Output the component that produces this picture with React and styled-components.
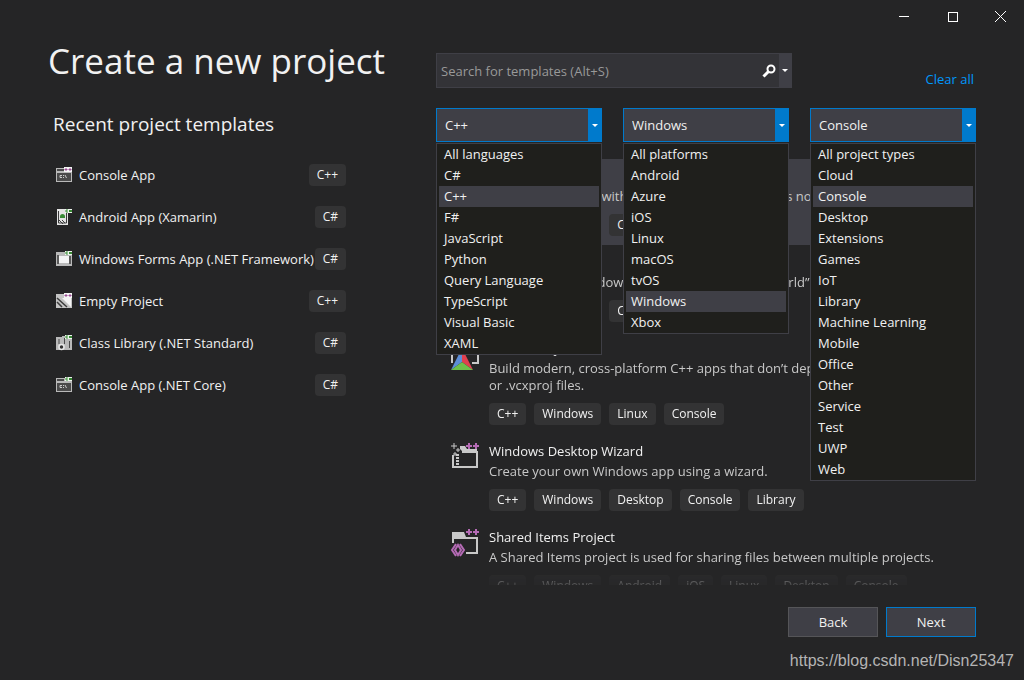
import React, { useState } from "react";
import styled, { createGlobalStyle, css } from "styled-components";

const GlobalStyle = createGlobalStyle`
  * {
    box-sizing: border-box;
  }

  body {
    margin: 0;
    background: #252526;
    color: #f1f1f1;
    font: 13px/20px "Open Sans", "Noto Sans", sans-serif;
  }

  button, input, select {
    font: inherit;
    color: inherit;
  }
`;

const Window = styled.div`
  display: flex;
  flex-direction: column;
  min-height: 100vh;
`;

const TitleBar = styled.div`
  display: flex;
  justify-content: flex-end;
`;

const WindowButton = styled.button`
  display: flex;
  align-items: center;
  justify-content: center;
  width: 48px;
  height: 32px;
  padding: 0;
  border: 0;
  background: none;
`;

const Columns = styled.main`
  display: grid;
  grid-template-columns: 298px minmax(0, 1fr);
  column-gap: 90px;
  padding: 0 48px;
`;

const PageTitle = styled.h1`
  margin: 5px 0 0;
  font-size: 35px;
  line-height: 48px;
  font-weight: 400;
  white-space: nowrap;
`;

const RecentPanel = styled.section`
  padding-left: 5px;
`;

const SectionTitle = styled.h2`
  margin: 24px 0 25px;
  font-size: 19px;
  line-height: 30px;
  font-weight: 400;
`;

const RecentList = styled.ul`
  display: flex;
  flex-direction: column;
  gap: 20px;
  margin: 0;
  padding: 0 0 0 3px;
  list-style: none;
`;

const RecentItem = styled.li`
  display: flex;
  align-items: center;
  height: 22px;
  white-space: nowrap;
`;

const RecentName = styled.span`
  flex: 1;
  min-width: 0;
  padding-left: 7px;
`;

const Tag = styled.span`
  padding: 0 8px;
  border-radius: 4px;
  background: #333334;
  font-size: 12px;
  line-height: 22px;
`;

const SearchRow = styled.div`
  display: flex;
  align-items: flex-end;
  justify-content: space-between;
  margin-top: 21px;
`;

const SearchBox = styled.div`
  display: flex;
  align-items: center;
  width: 66%;
  height: 35px;
  border: 1px solid #3f3f46;
  background: #333337;
`;

const SearchInput = styled.input`
  flex: 1;
  min-width: 0;
  padding: 0 4px;
  border: 0;
  outline: 0;
  background: none;

  &::placeholder {
    color: #999;
    opacity: 1;
  }
`;

const SearchButton = styled.button`
  display: flex;
  align-items: center;
  justify-content: center;
  width: 20px;
  height: 100%;
  padding: 0;
  border: 0;
  background: none;
`;

const SearchOptions = styled(SearchButton)`
  width: 12px;
  background: #3f3f46;
`;

const ClearLink = styled.a`
  padding-right: 2px;
  line-height: 18px;
  color: #0097fb;
  text-decoration: none;
`;

const Filters = styled.div`
  display: grid;
  grid-template-columns: repeat(3, minmax(0, 1fr));
  gap: 21px;
  margin-top: 20px;
`;

const Filter = styled.div`
  position: relative;
`;

const SelectFrame = styled.div`
  display: flex;
  align-items: center;
  height: 34px;
  border: 1px solid #007acc;
  background: linear-gradient(#007acc, #007acc) right / 13px 100% no-repeat #3f3f46;
`;

const Select = styled.select`
  flex: 1;
  min-width: 0;
  height: 100%;
  padding: 0 8px;
  border: 0;
  outline: 0;
  appearance: none;
  background: none;
`;

const SelectArrow = styled.span`
  display: flex;
  justify-content: center;
  width: 13px;
  pointer-events: none;
`;

const Menu = styled.ul`
  position: absolute;
  z-index: 1;
  top: 100%;
  left: 0;
  right: 0;
  margin: 1px 0 0;
  padding: 0 2px;
  border: 1px solid #3f3f46;
  background: #1f1f1c;
  list-style: none;
`;

const MenuItem = styled.li`
  padding: 0 5px;
  line-height: 21px;
  white-space: nowrap;
  cursor: default;
  ${({ $selected }) => $selected && css`
    background: #3f3f46;
  `}
`;

const Templates = styled.ul`
  height: 426px;
  margin: 17px 0 0;
  padding: 0;
  overflow: hidden;
  list-style: none;
  mask-image: linear-gradient(#000 410px, rgba(0, 0, 0, 0.4) 415px, rgba(0, 0, 0, 0.2));
`;

const Template = styled.li`
  display: flex;
  gap: 10px;
  padding: 7px 16px 9px 15px;
  background: ${({ $active }) => ($active ? "#3f3f46" : "none")};
`;

const TemplateIcon = styled.svg`
  flex: none;
  width: 28px;
  height: 28px;
  margin-top: 2px;
`;

const TemplateName = styled.h3`
  margin: 0;
  font-size: 13px;
  line-height: 20px;
  font-weight: 400;
`;

const TemplateText = styled.p`
  margin: 2px 0 9px;
  line-height: 17px;
  color: #c8c8c8;
`;

const Tags = styled.div`
  display: flex;
  gap: 8px;
`;

const Actions = styled.div`
  display: flex;
  justify-content: flex-end;
  gap: 8px;
  padding: 22px 48px 0;
`;

const ActionButton = styled.button`
  width: 90px;
  height: 30px;
  padding: 0;
  border: 1px solid ${({ $primary }) => ($primary ? "#007acc" : "#555558")};
  background: #3f3f46;
`;

const Credit = styled.footer`
  margin-top: auto;
  padding: 0 10px 8px;
  color: #b4b4b4;
  font: 16px/22px "Liberation Sans", Arial, sans-serif;
  text-align: right;
`;

const RECENT = [
    { name: "Console App", language: "C++", art: "console" },
    { name: "Android App (Xamarin)", language: "C#", art: "android" },
    { name: "Windows Forms App (.NET Framework)", language: "C#", art: "forms" },
    { name: "Empty Project", language: "C++", art: "empty" },
    { name: "Class Library (.NET Standard)", language: "C#", art: "library" },
    { name: "Console App (.NET Core)", language: "C#", art: "console" }
];

const FILTERS = [
    {
        label: "Language",
        value: "C++",
        options: ["All languages", "C#", "C++", "F#", "JavaScript", "Python",
            "Query Language", "TypeScript", "Visual Basic", "XAML"]
    },
    {
        label: "Platform",
        value: "Windows",
        options: ["All platforms", "Android", "Azure", "iOS", "Linux", "macOS",
            "tvOS", "Windows", "Xbox"]
    },
    {
        label: "Project type",
        value: "Console",
        options: ["All project types", "Cloud", "Console", "Desktop", "Extensions",
            "Games", "IoT", "Library", "Machine Learning", "Mobile", "Office",
            "Other", "Service", "Test", "UWP", "Web"]
    }
];

const TEMPLATES = [
    {
        name: "Empty Project",
        text: "Start from scratch with C++ for Windows. Provides no starting files.",
        tags: ["C++", "Windows", "Console"],
        art: "empty"
    },
    {
        name: "Console App",
        text: "Run code in a Windows terminal. Prints “Hello World” by default.",
        tags: ["C++", "Windows", "Console"],
        art: "console"
    },
    {
        name: "CMake Project",
        text: "Build modern, cross-platform C++ apps that don’t depend on .sln or\u00a0.vcxproj\u00a0files.",
        tags: ["C++", "Windows", "Linux", "Console"],
        art: "cmake"
    },
    {
        name: "Windows Desktop Wizard",
        text: "Create your own Windows app using a wizard.",
        tags: ["C++", "Windows", "Desktop", "Console", "Library"],
        art: "wizard"
    },
    {
        name: "Shared Items Project",
        text: "A Shared Items project is used for sharing files between multiple projects.",
        tags: ["C++", "Windows", "Android", "iOS", "Linux", "Desktop", "Console"],
        art: "shared"
    }
];

const RECENT_ART = {
    console: <>
        <path d="M0 1h16v14H0z" fill="#b9b9b9"/>
        <path d="M1 2h7v2H1zM1 6h14v8H1z" fill="#4a4a4a"/>
        <path d="M6 8.500H4v2h2M7.500 8v1M7.500 10v1M9 8l1.500 3" stroke="#ccc" fill="none"/>
    </>,
    android: <>
        <path d="M1 0h11v16H1z" fill="#e4e4e4"/>
        <path d="M2.500 2v12h8V2" stroke="#3c3c3c" fill="none"/>
        <path d="M4 7.500a2.500 2.500 0 0 1 5 0V9H4z" fill="#388a34"/>
        <path d="M3 11l4 4M6 11l3 3" stroke="#3c3c3c"/>
    </>,
    forms: <>
        <path d="M0 1h16v14H0z" fill="#b9b9b9"/>
        <path d="M1 4h2v9H1zM13 5h2v8h-2z" fill="#5a5a5a"/>
        <path d="M3 5h10v7H3z" fill="#f4f4f4"/>
    </>,
    empty: <>
        <path d="M0 1h16v14H0z" fill="#c4c4c4"/>
        <path d="M6 5h9v9z" fill="#f4f4f4"/>
        <path d="M1 5l10 9M1 9l5 5" stroke="#3c3c3c" strokeWidth="1.500"/>
    </>,
    library: <>
        <path d="M0 2h6v13H0zM6 1h5v14H6zM11 4h5v11h-5z" fill="#b9b9b9"/>
        <path d="M3 4v5M8.500 3v6M13.500 6v7" stroke="#4a4a4a"/>
        <circle cx="5.500" cy="12" r="2.500" fill="#333" stroke="#e8e8e8" strokeWidth="1.500"/>
    </>
};

const TEMPLATE_ART = {
    empty: <path d="M1.500 7v19h25V9M1 6h13v3h12" fill="none" stroke="#c8c8c8" strokeWidth="2"/>,
    console: <path d="M1.500 7v19h25V9M1 8h25M6 14l4 3-4 3" fill="none" stroke="#c8c8c8" strokeWidth="2"/>,
    cmake: <>
        <path d="M1 6h26v17H21M1 6v17" fill="none" stroke="#c8c8c8" strokeWidth="2"/>
        <path d="M11 8L0 30l11-8z" fill="#5c8dd6"/>
        <path d="M11 8l11 22-11-8z" fill="#e0404f"/>
        <path d="M0 30h22l-11-8z" fill="#6cc04a"/>
    </>,
    wizard: <>
        <path d="M9 3h5l2 3h10v3H12L9 6z" fill="#c8c8c8"/>
        <path d="M11 9h15v15H2V12" fill="none" stroke="#c8c8c8" strokeWidth="2"/>
        <path d="M5 12h3M5 15h3M5 18h3M5 21h3" stroke="#c8c8c8" strokeWidth="2"/>
        <path d="M3 0v6M0 3h6M7 5v4M5 7h4M4 9v4M2 11h4" stroke="#c8c8c8"/>
    </>,
    shared: <>
        <path d="M1 3h12l2 5h12v17H15v-2h10V10H3v4H1z" fill="#c8c8c8"/>
        <path d="M5 15l-4 6 4 6M9 15l4 6-4 6M7 16l-3 5 3 5 3-5z" fill="none" stroke="#b56bb5" strokeWidth="2"/>
    </>
};

const RecentIcon = ({ art, language }) => (
    <svg width="16" height="16" viewBox="0 0 16 16" aria-hidden="true">
        {RECENT_ART[art]}
        {language === "C++" ? <>
            <path d="M8 0h8v5H8z" fill="#f4f4f4"/>
            <path d="M8.500 2.500h3M10 1v3M12.500 2.500h3M14 1v3" stroke="#9b4f96"/>
        </> : <>
            <path d="M9 0h7v4H9z" fill="#eef6ee"/>
            <path d="M12 1h-2v2h2M13 1.500h3M13 2.500h3" stroke="#388a34" fill="none"/>
        </>}
    </svg>
);

const Arrow = () => (
    <svg width="6" height="3" viewBox="0 0 6 3" aria-hidden="true">
        <path d="M0 0h6L3 3z" fill="#fff"/>
    </svg>
);

const FilterBox = ({ label, value: initial, options }) => {
    const [value, setValue] = useState(initial);
    return <Filter>
        <SelectFrame>
            <Select aria-label={label} value={value} onChange={(e) => setValue(e.target.value)}>
                {options.map((option) => <option key={option}>{option}</option>)}
            </Select>
            <SelectArrow><Arrow/></SelectArrow>
        </SelectFrame>
        <Menu role="listbox" aria-label={label}>
            {options.map((option) => <MenuItem
                key={option}
                role="option"
                aria-selected={option === value}
                $selected={option === value}
                onClick={() => setValue(option)}
            >
                {option}
            </MenuItem>)}
        </Menu>
    </Filter>;
};

const App = () => (
    <Window>
        <GlobalStyle/>
        <TitleBar>
            <WindowButton aria-label="Minimize">
                <svg width="11" height="11"><path d="M0 5.500h10" stroke="#fff"/></svg>
            </WindowButton>
            <WindowButton aria-label="Maximize">
                <svg width="11" height="11">
                    <path d="M1.500 1.500h9v9h-9z" stroke="#fff" fill="none" shapeRendering="crispEdges"/>
                </svg>
            </WindowButton>
            <WindowButton aria-label="Close">
                <svg width="11" height="11"><path d="M0 0l11 11M11 0L0 11" stroke="#fff"/></svg>
            </WindowButton>
        </TitleBar>
        <Columns>
            <div>
                <PageTitle>Create a new project</PageTitle>
                <RecentPanel>
                    <SectionTitle>Recent project templates</SectionTitle>
                    <RecentList>
                        {RECENT.map(({ name, language, art }) => <RecentItem key={name}>
                            <RecentIcon art={art} language={language}/>
                            <RecentName>{name}</RecentName>
                            <Tag>{language}</Tag>
                        </RecentItem>)}
                    </RecentList>
                </RecentPanel>
            </div>
            <div>
                <SearchRow>
                    <SearchBox>
                        <SearchInput
                            type="text"
                            aria-label="Search for templates"
                            placeholder="Search for templates (Alt+S)"
                        />
                        <SearchButton aria-label="Search">
                            <svg width="14" height="14" viewBox="0 0 14 14">
                                <circle cx="9" cy="5" r="3.500" fill="none" stroke="#fff" strokeWidth="2"/>
                                <path d="M6.500 7.500L1.500 12.500" stroke="#fff" strokeWidth="3"/>
                            </svg>
                        </SearchButton>
                        <SearchOptions aria-label="Search options"><Arrow/></SearchOptions>
                    </SearchBox>
                    <ClearLink href="#clear">Clear all</ClearLink>
                </SearchRow>
                <Filters>
                    {FILTERS.map((filter) => <FilterBox key={filter.label} {...filter}/>)}
                </Filters>
                <Templates>
                    {TEMPLATES.map(({ name, text, tags, art }, index) => <Template
                        key={name}
                        $active={index === 0}
                    >
                        <TemplateIcon viewBox="0 0 28 28" overflow="visible" aria-hidden="true">
                            {TEMPLATE_ART[art]}
                            <path d="M15 3h6M18 0v6M22 3h6M25 0v6" stroke="#b56bb5" strokeWidth="2"/>
                        </TemplateIcon>
                        <div>
                            <TemplateName>{name}</TemplateName>
                            <TemplateText>{text}</TemplateText>
                            <Tags>
                                {tags.map((tag) => <Tag key={tag}>{tag}</Tag>)}
                            </Tags>
                        </div>
                    </Template>)}
                </Templates>
            </div>
        </Columns>
        <Actions>
            <ActionButton type="button">Back</ActionButton>
            <ActionButton type="button" $primary>Next</ActionButton>
        </Actions>
        <Credit>https://blog.csdn.net/Disn25347</Credit>
    </Window>
);

export default App;
